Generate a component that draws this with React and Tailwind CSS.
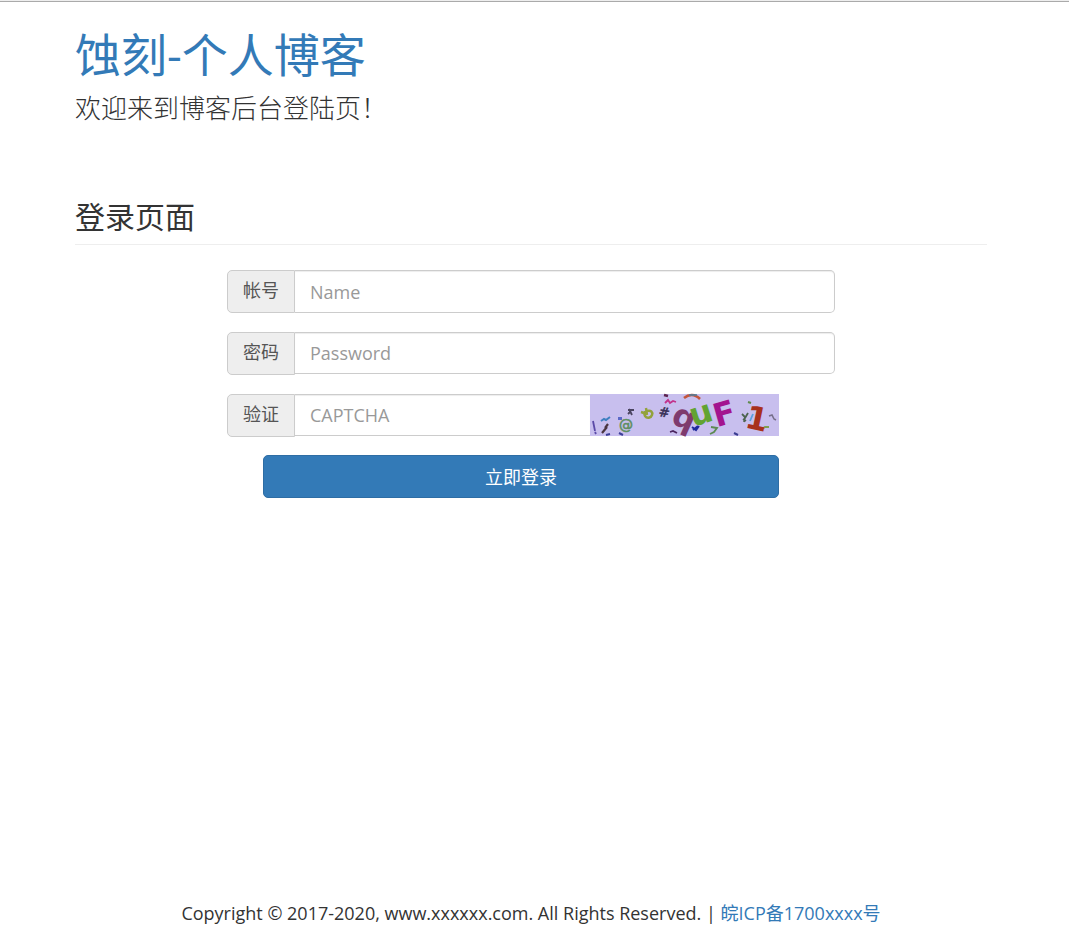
import React, { useState } from 'react';

function CaptchaImage() {
  return (
    <svg
      viewBox="0 0 189 42"
      className="block h-[42px] w-[189px] overflow-visible"
      role="img"
      aria-label="CAPTCHA"
      fill="none"
      strokeWidth="1.6"
      fontFamily="'DejaVu Sans', sans-serif"
    >
      <rect width="189" height="42" fill="#c8bfee" />

      {/* background noise */}
      <path d="M3 27l2 10M5 38l1 2" stroke="#5b4aa8" strokeWidth="1.8" />
      <path d="M11 27l3-2 2 1 4-3" stroke="#3f7fc0" strokeWidth="2" />
      <path d="M18 30l-3 4M17 33l-5 6" stroke="#4a3540" strokeWidth="2.2" />
      <path d="M28 23h4v3h-4z" fill="#5a68c8" />
      <path d="M16 41l4-1M29 39l4 2" stroke="#3c3f98" strokeWidth="2" />
      <path d="M38 16l6 0M39 15l3 6M38 20l3-3" stroke="#4a4460" strokeWidth="1.8" />
      <path d="M74 1l4 1" stroke="#5c2350" strokeWidth="2.4" />
      <path d="M75 9l3-3 2 3 3-2 3 1" stroke="#c2338c" strokeWidth="1.8" />
      <path d="M80 38l3-1 4 2" stroke="#4b2560" strokeWidth="1.8" />
      <path d="M94 4c5-4 11-4 16 1" stroke="#c2553b" strokeWidth="2.6" />
      <path d="M99 1l8 0" stroke="#4f7f9c" />
      <path d="M121 33l6 1-3 4-4 2" stroke="#5c8a52" strokeWidth="1.8" />
      <path d="M144 39l4 2" stroke="#3a3c90" strokeWidth="2" />
      <path d="M152 20l3 3-1 5M158 19l-3 5M153 25l3 2" stroke="#4d6450" strokeWidth="1.8" />
      <path d="M163 20l-3 7" stroke="#5aa0dc" strokeWidth="1.8" />
      <path d="M158 8l3 1" stroke="#5f8a4c" strokeWidth="2" />
      <path d="M179 22l3-1 2 4 2 1" stroke="#77708c" />
      <path d="M172 35l3-2 4 0" stroke="#7fa050" strokeWidth="2" />
      <text x="29" y="36" fontSize="14" fill="#5f8f62" stroke="#5f8f62" strokeWidth="0.6">@</text>
      <path
        d="M51 18l6 2M56 14l1 7M57 17c4-1 6 1 5 4s-5 4-7 1 0-4 2-5"
        stroke="#93a23c"
        strokeWidth="2.4"
      />
      <text x="69" y="23" fontSize="13" fill="#3a3158" stroke="#3a3158" strokeWidth="0.6" transform="rotate(8 75 18)">#</text>

      {/* code */}
      <g fontSize="32" fontWeight="bold">
        <text x="82" y="34" fill="#7e3a6e" transform="rotate(24 94 26)">q</text>
        <text x="100" y="30" fill="#62a332" transform="rotate(-18 111 21)">u</text>
        <text x="123" y="31" fill="#a3138f" transform="rotate(-16 133 19)">F</text>
        <text x="156" y="36" fill="#a8301c" transform="rotate(12 168 24)">1</text>
      </g>
      <path d="M102 33l4 3 3-4M103 36l5-4" stroke="#1f2a9c" strokeWidth="2" />
    </svg>
  );
}

function FieldLabel({ htmlFor, children }) {
  return (
    <label
      htmlFor={htmlFor}
      className="flex h-[43px] w-[68px] shrink-0 items-center justify-center rounded-l-[5px] border border-[#ccc] bg-[#eee] pb-1 text-[#555]"
    >
      {children}
    </label>
  );
}

const inputClass =
  'min-w-0 flex-1 border border-l-0 border-[#ccc] bg-white px-[15px] text-[#555] shadow-[inset_0_1px_1px_rgba(0,0,0,0.075)] outline-none placeholder:text-[#999]';

export default function App() {
  const [form, setForm] = useState({ name: '', password: '', captcha: '' });

  const handleChange = (e) => {
    setForm({ ...form, [e.target.name]: e.target.value });
  };

  const handleSubmit = (e) => {
    e.preventDefault();
  };

  return (
    <div className="flex min-h-screen flex-col border-t border-[#eee] bg-white font-['Open_Sans','Noto_Sans_CJK_SC',sans-serif] text-lg text-[#333]">
      <div className="flex flex-1 flex-col border-t border-[#aaa] pr-[82px] pl-[75px]">
        <header className="pt-6">
          <h1 className="text-[46px] leading-[56px]">
            <a href="#" className="text-[#337ab7]">蚀刻-个人博客</a>
          </h1>
          <p className="mt-2 text-[26px] leading-9 font-light">欢迎来到博客后台登陆页！</p>
        </header>

        <main className="mt-[71px]">
          <h2 className="border-b border-[#eee] pb-[7px] text-[30px] leading-10">登录页面</h2>

          <form onSubmit={handleSubmit} className="mx-auto mt-[25px] w-2/3">
            <div className="mb-[19px] flex">
              <FieldLabel htmlFor="name">帐号</FieldLabel>
              <input
                id="name"
                name="name"
                type="text"
                placeholder="Name"
                value={form.name}
                onChange={handleChange}
                className={`${inputClass} h-[43px] rounded-r-[5px]`}
              />
            </div>
            <div className="mb-[19px] flex">
              <FieldLabel htmlFor="password">密码</FieldLabel>
              <input
                id="password"
                name="password"
                type="password"
                placeholder="Password"
                value={form.password}
                onChange={handleChange}
                className={`${inputClass} h-[42px] rounded-r-[5px]`}
              />
            </div>
            <div className="mr-14 mb-[18px] flex">
              <FieldLabel htmlFor="captcha">验证</FieldLabel>
              <input
                id="captcha"
                name="captcha"
                type="text"
                placeholder="CAPTCHA"
                value={form.captcha}
                onChange={handleChange}
                className={`${inputClass} h-[42px] border-r-0`}
              />
              <CaptchaImage />
            </div>
            <div className="mr-14 ml-9">
              <button
                type="submit"
                className="h-[43px] w-full rounded-[5px] border border-[#2e6da4] bg-[#337ab7] text-white"
              >
                立即登录
              </button>
            </div>
          </form>
        </main>

        <footer className="mt-auto pb-[22px] text-center">
          Copyright © 2017-2020, www.xxxxxx.com. All Rights Reserved. |{' '}
          <a href="#" className="text-[#337ab7]">皖ICP备1700xxxx号</a>
        </footer>
      </div>
    </div>
  );
}
